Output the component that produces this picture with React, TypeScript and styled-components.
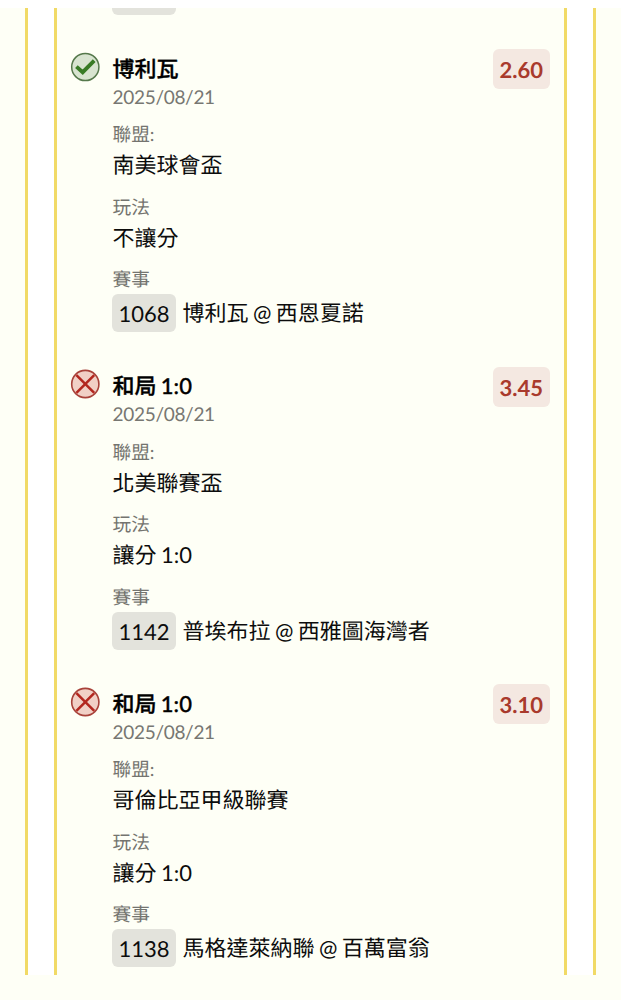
import React from "react";
import styled, { createGlobalStyle } from "styled-components";

const GlobalStyle = createGlobalStyle`
  *, *::before, *::after { box-sizing: border-box; }
  body {
    margin: 0;
    background: #fefff6;
    font-family: Lato, "Noto Sans CJK TC", sans-serif;
    color: #0c0c0c;
    text-rendering: geometricPrecision;
    word-spacing: -1.2px;
  }
`;

const Page = styled.main`
  height: 1000px;
  border-top: 8px solid #fff;
  overflow: hidden;
`;

const Outer = styled.div`
  height: 967px;
  margin: 0 25.5px 0 25px;
  padding: 0 26px;
  border: solid #f1da66;
  border-width: 0 3px;
  background: #fff;
`;

const Slip = styled.section`
  height: 967px;
  padding: 0 14px;
  border: solid #f1da66;
  border-width: 0 3px;
  background: #fefff6;
  overflow: hidden;
`;

const PreviousTail = styled.div`
  width: 64px;
  height: 7px;
  margin: 0 0 34.4px 41px;
  border-radius: 0 0 6px 6px;
  background: #e3e3dc;
`;

const Leg = styled.article`
  display: flex;
  align-items: flex-start;
  height: 317.5px;
`;

const StatusIcon = styled.svg`
  flex: none;
  width: 30px;
  height: 30px;
  margin: 2.6px 11px 0 -1px;
`;

const Details = styled.div`
  flex: 1;
  padding: 5.2px 0 0 1px;
  white-space: nowrap;
`;

const Title = styled.h2`
  margin: 0;
  padding-left: 0.5px;
  font-size: 22px;
  font-weight: 500;
  line-height: 28px;
  color: #000;
  -webkit-text-stroke: 0.35px #000;
`;

const PlacedOn = styled.div`
  margin-bottom: 8.8px;
  padding: 1px 0 0 0.5px;
  font-size: 19px;
  letter-spacing: -0.3px;
  line-height: 28px;
  color: #777772;
`;

const Field = styled.div`
  margin-bottom: 11.5px;
`;

const Label = styled.div`
  padding-left: 0.5px;
  font-size: 18.7px;
  line-height: 29px;
  color: #74746f;
`;

const Value = styled.div`
  display: flex;
  align-items: center;
  height: 32px;
  padding-left: 0.5px;
  font-size: 22px;
  line-height: 32px;
`;

const MatchRow = styled(Value)`
  height: 38px;
  padding-left: 0;
  gap: 6.6px;
`;

const MatchCode = styled.span`
  width: 64px;
  height: 38px;
  border-radius: 6px;
  background: #e3e3dc;
  text-align: center;
  line-height: 39px;
`;

const Odds = styled.div`
  flex: none;
  width: 56.5px;
  height: 40px;
  border-radius: 6px;
  background: #f4e8e1;
  color: #a93a2c;
  font-size: 22px;
  font-weight: 700;
  line-height: 41px;
  text-align: center;
`;

interface Pick {
  won: boolean;
  title: string;
  date: string;
  league: string;
  market: string;
  code: string;
  match: string;
  odds: string;
}

const picks: Pick[] = [
  { won: true, title: "博利瓦", date: "2025/08/21", league: "南美球會盃", market: "不讓分", code: "1068", match: "博利瓦 @ 西恩夏諾", odds: "2.60" },
  { won: false, title: "和局 1:0", date: "2025/08/21", league: "北美聯賽盃", market: "讓分 1:0", code: "1142", match: "普埃布拉 @ 西雅圖海灣者", odds: "3.45" },
  { won: false, title: "和局 1:0", date: "2025/08/21", league: "哥倫比亞甲級聯賽", market: "讓分 1:0", code: "1138", match: "馬格達萊納聯 @ 百萬富翁", odds: "3.10" },
];

function Status({ won }: { won: boolean }) {
  return won ? (
    <StatusIcon viewBox="0 0 30 30" fill="none">
      <circle cx="15.3" cy="15" r="13.6" fill="#d8e4d0" stroke="#55784b" strokeWidth="1.5" />
      <path d="M6.4 14.6L12.7 20.2L24.2 8.6" stroke="#387b25" strokeWidth="3.9" />
    </StatusIcon>
  ) : (
    <StatusIcon viewBox="0 0 30 30" fill="none">
      <circle cx="15.3" cy="15" r="13.6" fill="#f1d0c6" stroke="#a8423a" strokeWidth="1.6" />
      <path d="M6.4 6.2L24.2 23.8M24.2 6.2L6.4 23.8" stroke="#b3271f" strokeWidth="2.5" />
    </StatusIcon>
  );
}

export default function App() {
  return (
    <>
      <GlobalStyle />
      <Page>
        <Outer>
          <Slip>
            <PreviousTail />
            {picks.map((pick) => (
              <Leg key={pick.code}>
                <Status won={pick.won} />
                <Details>
                  <Title>{pick.title}</Title>
                  <PlacedOn>{pick.date}</PlacedOn>
                  <Field>
                    <Label>聯盟:</Label>
                    <Value>{pick.league}</Value>
                  </Field>
                  <Field>
                    <Label>玩法</Label>
                    <Value>{pick.market}</Value>
                  </Field>
                  <Field>
                    <Label>賽事</Label>
                    <MatchRow>
                      <MatchCode>{pick.code}</MatchCode>
                      <span>{pick.match}</span>
                    </MatchRow>
                  </Field>
                </Details>
                <Odds>{pick.odds}</Odds>
              </Leg>
            ))}
          </Slip>
        </Outer>
      </Page>
    </>
  );
}
